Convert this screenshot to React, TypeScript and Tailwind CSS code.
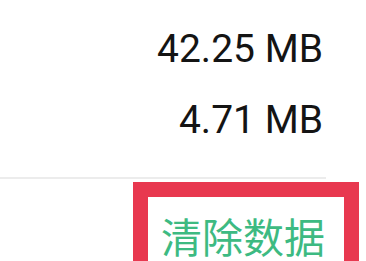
export default function App() {
  return (
    <div className="w-[366px] h-[261px] overflow-hidden bg-white relative">
      <div className="flex flex-col items-end pr-[43px]" style={{ fontFamily: "Roboto, 'Liberation Sans', sans-serif" }}>
        <div className="mt-[30px] text-[39px] leading-none text-[#141414]">42.25 MB</div>
        <div className="mt-[32px] text-[39px] leading-none text-[#141414]">4.71 MB</div>
      </div>
      <div className="mt-[37px] w-[326px] h-[2px] bg-[#ececec]" />
      <div className="ml-[133px] mt-[3px] w-[226px] h-[120px] border-[15px] border-[#e8384f] bg-white flex justify-start">
        <div
          className="ml-[13px] mt-[18px] text-[41px] leading-none text-[#3dba82]"
          style={{ fontFamily: "'Noto Sans CJK SC', sans-serif" }}
        >
          清除数据
        </div>
      </div>
    </div>
  );
}
